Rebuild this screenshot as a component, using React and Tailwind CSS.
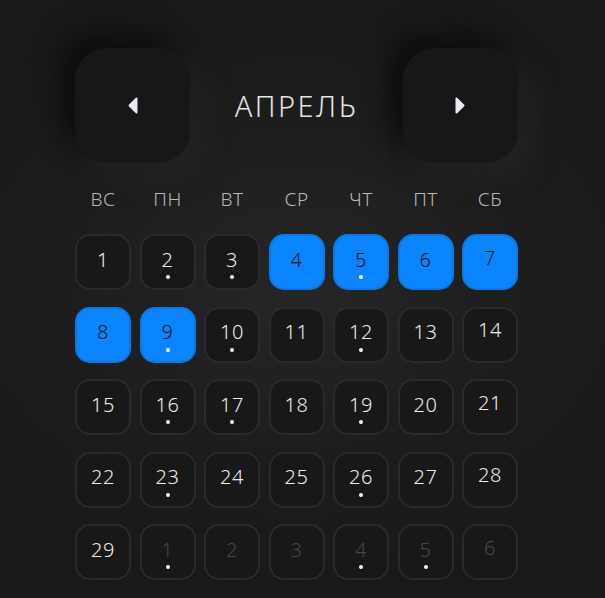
import React from 'react'

const weekdays = ['ВС', 'ПН', 'ВТ', 'СР', 'ЧТ', 'ПТ', 'СБ']

// day, muted (next month), selected, has event dot
const days = [
  [1, 0, 0, 0], [2, 0, 0, 1], [3, 0, 0, 1], [4, 0, 1, 0], [5, 0, 1, 1], [6, 0, 1, 0], [7, 0, 1, 0],
  [8, 0, 1, 0], [9, 0, 1, 1], [10, 0, 0, 1], [11, 0, 0, 0], [12, 0, 0, 1], [13, 0, 0, 0], [14, 0, 0, 0],
  [15, 0, 0, 0], [16, 0, 0, 1], [17, 0, 0, 1], [18, 0, 0, 0], [19, 0, 0, 1], [20, 0, 0, 0], [21, 0, 0, 0],
  [22, 0, 0, 0], [23, 0, 0, 1], [24, 0, 0, 0], [25, 0, 0, 0], [26, 0, 0, 1], [27, 0, 0, 0], [28, 0, 0, 0],
  [29, 0, 0, 0], [1, 1, 0, 1], [2, 1, 0, 0], [3, 1, 0, 0], [4, 1, 0, 1], [5, 1, 0, 1], [6, 1, 0, 0],
]

function Arrow({ dir }) {
  const d = dir === 'left' ? 'M8.5 1.5 L8.5 15.5 L1.5 8.5 Z' : 'M1.5 1.5 L1.5 15.5 L8.5 8.5 Z'
  return (
    <svg width="10" height="17" viewBox="0 0 10 17">
      <path d={d} fill="#e9ebf2" stroke="#e9ebf2" strokeWidth="2" strokeLinejoin="round" />
    </svg>
  )
}

function NavButton({ dir }) {
  return (
    <button className="w-[115px] h-[115px] rounded-[32px] bg-[#171717] flex items-center justify-center shadow-[-14px_-14px_26px_#0d0d0d,14px_14px_26px_#242424]">
      <Arrow dir={dir} />
    </button>
  )
}

export default function App() {
  return (
    <div
      className="min-h-[598px] w-full bg-[#1a1a1a] bg-[radial-gradient(ellipse_420px_300px_at_49%_48%,#262626_0%,#1d1d1d_55%,#191919_100%)] text-[#e6e6e6]"
      style={{ fontFamily: '"Noto Sans", "Open Sans", sans-serif' }}
    >
      <div className="w-[593px] flex justify-center pt-[48px]">
        <div className="w-[443px]">
          <div className="flex items-center justify-between">
            <NavButton dir="left" />
            <div className="text-[29px] font-light tracking-[2.5px] text-[#e4e4e4] leading-none">АПРЕЛЬ</div>
            <NavButton dir="right" />
          </div>

          <div className="grid grid-cols-7 gap-x-[8.5px] mt-[24px]">
            {weekdays.map((w) => (
              <div key={w} className="text-center text-[19px] font-light tracking-[0.5px] text-[#b8b8b8] leading-[24px]">
                {w}
              </div>
            ))}
          </div>

          <div className="grid grid-cols-7 gap-x-[8.5px] gap-y-[16.5px] mt-[23px]">
            {days.map(([n, muted, sel, dot], i) => {
              const sat = i % 7 === 6
              return (
                <div
                  key={i}
                  className={`relative h-[56px] rounded-[15px] border-2 flex items-center justify-center ${
                    sel ? 'bg-[#0a84ff] border-[#0b78e6]' : 'bg-[#181818] border-[#2a2a2a]'
                  }`}
                >
                  <span
                    className={`text-[20px] font-light tracking-[0.5px] leading-none ${sat ? '-mt-[9px]' : '-mt-[5px]'} ${
                      sel ? 'text-[#121212]' : muted ? 'text-[#464646]' : 'text-[#ececec]'
                    }`}
                  >
                    {n}
                  </span>
                  {dot ? (
                    <span className="absolute left-1/2 -translate-x-1/2 bottom-[9px] w-[4px] h-[4px] rounded-full bg-white" />
                  ) : null}
                </div>
              )
            })}
          </div>
        </div>
      </div>
    </div>
  )
}
